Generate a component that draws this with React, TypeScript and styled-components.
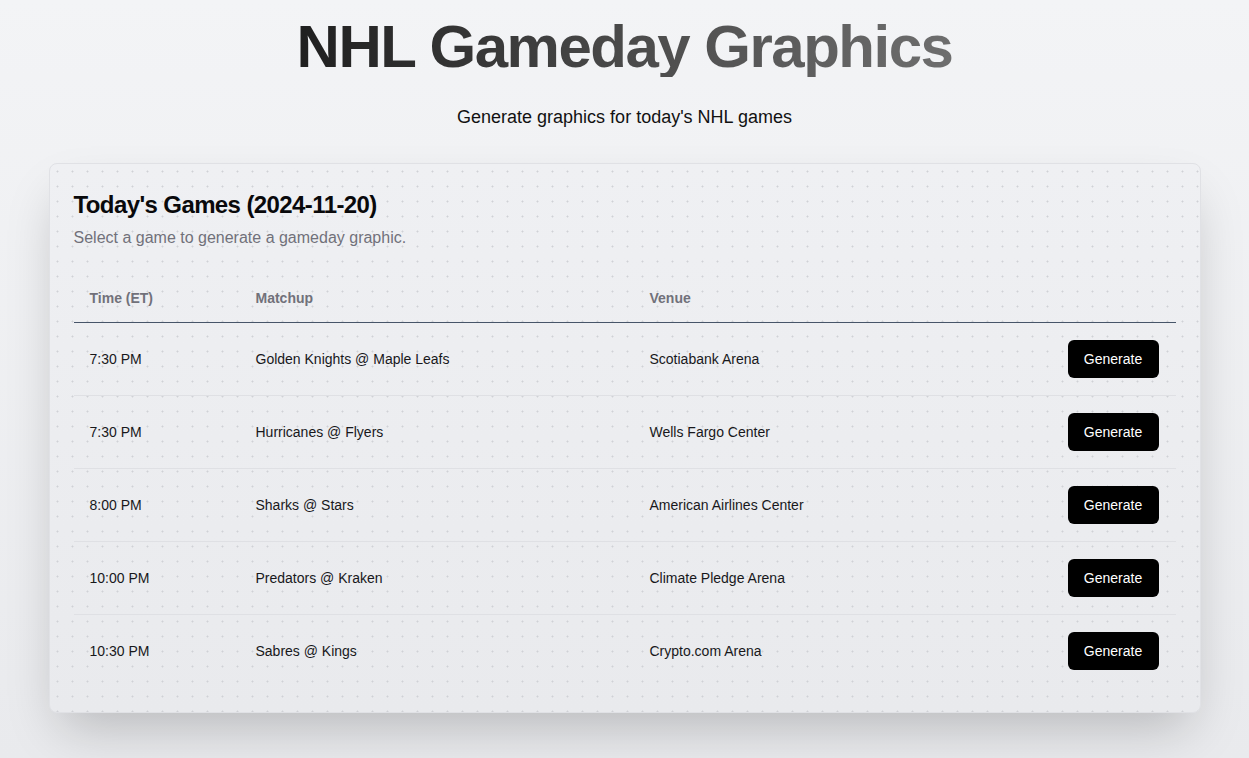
import React from "react";
import styled, { createGlobalStyle } from "styled-components";

const GlobalStyle = createGlobalStyle`
  html, body {
    margin: 0;
    padding: 0;
  }
  body {
    font-family: "Liberation Sans", Arial, sans-serif;
    background: linear-gradient(180deg, #f3f4f6 0%, #e9eaed 100%);
    min-height: 758px;
    color: #09090b;
  }
  * { box-sizing: border-box; }
`;

const Page = styled.main`
  min-height: 758px;
  padding: 17px 48px 40px;
  display: flex;
  flex-direction: column;
  align-items: center;
`;

const Title = styled.h1`
  margin: 0;
  font-size: 60px;
  line-height: 60px;
  font-weight: 700;
  letter-spacing: -0.025em;
  background: linear-gradient(90deg, #1f1f1f 0%, #4a4a4a 50%, #6e6e6e 100%);
  -webkit-background-clip: text;
  background-clip: text;
  color: transparent;
`;

const Subtitle = styled.p`
  margin: 26px 0 0;
  font-size: 18px;
  line-height: 28px;
  color: #111;
`;

const Card = styled.section`
  margin-top: 32px;
  width: 100%;
  max-width: 1152px;
  border: 1px solid #e0e1e5;
  border-radius: 8px;
  padding: 25px 24px 25px;
  background-color: #eeeff2;
  background-image: radial-gradient(circle, #d0d1d6 0.8px, transparent 1.2px),
    linear-gradient(180deg, #eff0f3 0%, #e9eaed 100%);
  background-size: 15px 15px, 100% 100%;
  background-position: 0 0, 0 0;
  box-shadow: 0 25px 50px -12px rgba(0, 0, 0, 0.22);
`;

const CardTitle = styled.h2`
  margin: 0;
  font-size: 24px;
  line-height: 32px;
  font-weight: 700;
  letter-spacing: -0.025em;
  color: #09090b;
`;

const CardDesc = styled.p`
  margin: 5px 0 0;
  font-size: 16px;
  line-height: 24px;
  color: #71717a;
`;

const Table = styled.table`
  margin-top: 25px;
  width: 100%;
  border-collapse: collapse;
  font-size: 14px;
`;

const HeadRow = styled.tr`
  border-bottom: 1px solid #475569;
`;

const Th = styled.th<{ $w?: string }>`
  height: 47px;
  padding: 0 16px;
  text-align: left;
  font-weight: 700;
  color: #71717a;
  width: ${(p) => p.$w || "auto"};
`;

const Row = styled.tr`
  border-bottom: 1px solid #dfe0e4;
  &:last-child {
    border-bottom: none;
  }
`;

const Td = styled.td<{ $right?: boolean }>`
  height: 73px;
  padding: 0 ${(p) => (p.$right ? "17px" : "16px")} 0 16px;
  color: #18181b;
  text-align: ${(p) => (p.$right ? "right" : "left")};
  vertical-align: middle;
`;

const Button = styled.button`
  height: 38px;
  width: 91px;
  border: none;
  border-radius: 6px;
  background: #000;
  color: #fff;
  font-family: "Liberation Sans", Arial, sans-serif;
  font-size: 14px;
  cursor: pointer;
`;

const games = [
  { time: "7:30 PM", matchup: "Golden Knights @ Maple Leafs", venue: "Scotiabank Arena" },
  { time: "7:30 PM", matchup: "Hurricanes @ Flyers", venue: "Wells Fargo Center" },
  { time: "8:00 PM", matchup: "Sharks @ Stars", venue: "American Airlines Center" },
  { time: "10:00 PM", matchup: "Predators @ Kraken", venue: "Climate Pledge Arena" },
  { time: "10:30 PM", matchup: "Sabres @ Kings", venue: "Crypto.com Arena" },
];

export default function App() {
  return (
    <>
      <GlobalStyle />
      <Page>
        <Title>NHL Gameday Graphics</Title>
        <Subtitle>Generate graphics for today's NHL games</Subtitle>
        <Card>
          <CardTitle>Today's Games (2024-11-20)</CardTitle>
          <CardDesc>Select a game to generate a gameday graphic.</CardDesc>
          <Table>
            <thead>
              <HeadRow>
                <Th $w="166px">Time (ET)</Th>
                <Th $w="394px">Matchup</Th>
                <Th>Venue</Th>
                <Th $w="140px"></Th>
              </HeadRow>
            </thead>
            <tbody>
              {games.map((g, i) => (
                <Row key={i}>
                  <Td>{g.time}</Td>
                  <Td>{g.matchup}</Td>
                  <Td>{g.venue}</Td>
                  <Td $right>
                    <Button>Generate</Button>
                  </Td>
                </Row>
              ))}
            </tbody>
          </Table>
        </Card>
      </Page>
    </>
  );
}
